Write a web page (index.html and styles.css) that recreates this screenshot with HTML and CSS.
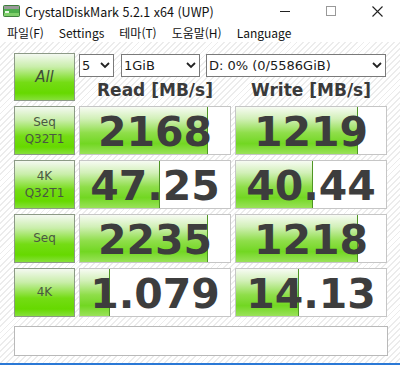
FILE: index.html
```html
<!DOCTYPE html>
<html lang="ko">
<head>
  <meta charset="UTF-8" />
  <meta name="viewport" content="width=device-width, initial-scale=1.0"/>
  <title>CrystalDiskMark 5.2.1 x64 (UWP)</title>
  <link rel="stylesheet" href="styles.css">
</head>
<body>

  <div class="window">

    <header class="titlebar">
      <svg class="app-icon" width="17" height="12" viewBox="0 0 17 12">
        <rect x="0.5" y="0.5" width="16" height="11" rx="1" fill="#4cae4a" stroke="#3f7f3c"/>
        <rect x="1" y="1" width="15" height="3" fill="#9a9a9a"/>
        <rect x="1" y="8" width="15" height="3" fill="#7fcf6a"/>
        <rect x="2" y="6" width="4" height="2" fill="#e9f6e4"/>
      </svg>
      <span class="title">CrystalDiskMark 5.2.1 x64 (UWP)</span>
      <div class="controls">
        <span class="ctl"><svg width="10" height="10" viewBox="0 0 10 10"><line x1="0" y1="5.5" x2="10" y2="5.5" stroke="#222" stroke-width="1"/></svg></span>
        <span class="ctl"><svg width="10" height="10" viewBox="0 0 10 10"><rect x="0.5" y="0.5" width="9" height="9" fill="none" stroke="#999" stroke-width="1"/></svg></span>
        <span class="ctl"><svg width="11" height="11" viewBox="0 0 11 11"><path d="M0.5 0.5 L10.5 10.5 M10.5 0.5 L0.5 10.5" stroke="#222" stroke-width="1.1"/></svg></span>
      </div>
    </header>

    <nav class="menubar">
      <span>파일(F)</span>
      <span>Settings</span>
      <span>테마(T)</span>
      <span>도움말(H)</span>
      <span>Language</span>
    </nav>

    <main class="board">
      <div class="grid">
        <div class="label all">All</div>
        <div class="top">
          <div class="selects">
            <div class="select s-count">5<svg class="chev" width="10" height="7" viewBox="0 0 10 7"><polyline points="1,1 5,5 9,1" fill="none" stroke="#222" stroke-width="1.8"/></svg></div>
            <div class="select s-size">1GiB<svg class="chev" width="10" height="7" viewBox="0 0 10 7"><polyline points="1,1 5,5 9,1" fill="none" stroke="#222" stroke-width="1.8"/></svg></div>
            <div class="select s-drive">D: 0% (0/5586GiB)<svg class="chev" width="10" height="7" viewBox="0 0 10 7"><polyline points="1,1 5,5 9,1" fill="none" stroke="#222" stroke-width="1.8"/></svg></div>
          </div>
          <div class="heads">
            <div>Read [MB/s]</div>
            <div>Write [MB/s]</div>
          </div>
        </div>

        <div class="label"><span>Seq</span><span>Q32T1</span></div>
        <div class="cell"><div class="bar" style="width: 85%"></div><span class="num">2168</span></div>
        <div class="cell"><div class="bar" style="width: 81%"></div><span class="num">1219</span></div>

        <div class="label"><span>4K</span><span>Q32T1</span></div>
        <div class="cell"><div class="bar" style="width: 53%"></div><span class="num">47.25</span></div>
        <div class="cell"><div class="bar" style="width: 51%"></div><span class="num">40.44</span></div>

        <div class="label"><span>Seq</span></div>
        <div class="cell"><div class="bar" style="width: 85%"></div><span class="num">2235</span></div>
        <div class="cell"><div class="bar" style="width: 81%"></div><span class="num">1218</span></div>

        <div class="label"><span>4K</span></div>
        <div class="cell"><div class="bar" style="width: 20%"></div><span class="num">1.079</span></div>
        <div class="cell"><div class="bar" style="width: 42%"></div><span class="num">14.13</span></div>
      </div>

      <div class="comment"></div>
    </main>

  </div>

</body>
</html>
```

FILE: styles.css
```css
body {
  margin: 0;
  font-family: "DejaVu Sans", sans-serif;
  color: #222;
}
.window {
  width: 400px;
  height: 365px;
  display: flex;
  flex-direction: column;
  background: white;
  box-sizing: border-box;
  border-bottom: 2px solid #2b79d6;
}

/* title bar */
.titlebar {
  height: 22px;
  display: flex;
  align-items: center;
  font-family: "Noto Sans CJK KR", "Noto Sans", sans-serif;
  font-size: 12.5px;
  color: #111;
}
.app-icon {
  margin: 0 5px 0 3px;
}
.controls {
  margin-left: auto;
  display: flex;
  align-self: stretch;
}
.ctl {
  width: 46px;
  display: flex;
  align-items: center;
  justify-content: center;
}

/* menu bar */
.menubar {
  height: 20px;
  display: flex;
  align-items: center;
  gap: 15px;
  padding-left: 7px;
  font-family: "Noto Sans CJK KR", "Noto Sans", sans-serif;
  font-size: 12px;
  color: #111;
}

/* main area */
.board {
  flex: 1;
  padding: 11px 0 0 14px;
  background: repeating-linear-gradient(135deg, #ffffff 0 3px, #ececec 3px 4.3px);
}
.grid {
  display: grid;
  grid-template-columns: 61px 152px 152px;
  grid-template-rows: 48px repeat(4, 49px);
  column-gap: 4px;
  row-gap: 5px;
}
.label {
  box-sizing: border-box;
  border: 1px solid #8c9a86;
  background: linear-gradient(to bottom, #f4f9f1 0%, #c9eeaa 28%, #74dc14 62%, #66d900 85%, #86e03a 100%);
  display: flex;
  flex-direction: column;
  align-items: center;
  justify-content: center;
  font-size: 12px;
  line-height: 17px;
  color: #4a5842;
}
.label.all {
  font-size: 15px;
  font-style: italic;
  color: #3e4e36;
}
.top {
  grid-column: 2 / 4;
  padding-top: 1px;
}
.selects {
  display: flex;
  gap: 6px;
}
.select {
  box-sizing: border-box;
  height: 23px;
  border: 1px solid #7a7a7a;
  background: white;
  display: flex;
  align-items: center;
  justify-content: space-between;
  padding: 0 3px 0 2px;
  font-size: 13px;
  color: #1a1a1a;
}
.s-count { width: 35px; margin-right: 1px; }
.s-size { width: 79px; }
.s-drive { width: 180px; }
.heads {
  display: grid;
  grid-template-columns: 152px 152px;
  column-gap: 4px;
  padding-top: 3px;
  line-height: 21px;
  font-size: 17px;
  font-weight: bold;
  text-align: center;
  color: #3a3a3a;
}
.cell {
  position: relative;
  box-sizing: border-box;
  border: 1px solid #c6c6c6;
  background: white;
  overflow: hidden;
  text-align: center;
}
.bar {
  position: absolute;
  left: 0;
  top: 0;
  bottom: 0;
  box-sizing: border-box;
  border-right: 1px solid #4f9524;
  background: linear-gradient(to bottom, #f7fbf3 0%, #d2f0b8 25%, #8fde4a 55%, #72d722 78%, #9ae25a 100%);
}
.num {
  position: relative;
  font-size: 41px;
  font-weight: bold;
  line-height: 50px;
  color: #3d3d3d;
}
.comment {
  box-sizing: border-box;
  width: 374px;
  height: 30px;
  margin-top: 9px;
  border: 1px solid #b9b9b9;
  background: white;
}
```
